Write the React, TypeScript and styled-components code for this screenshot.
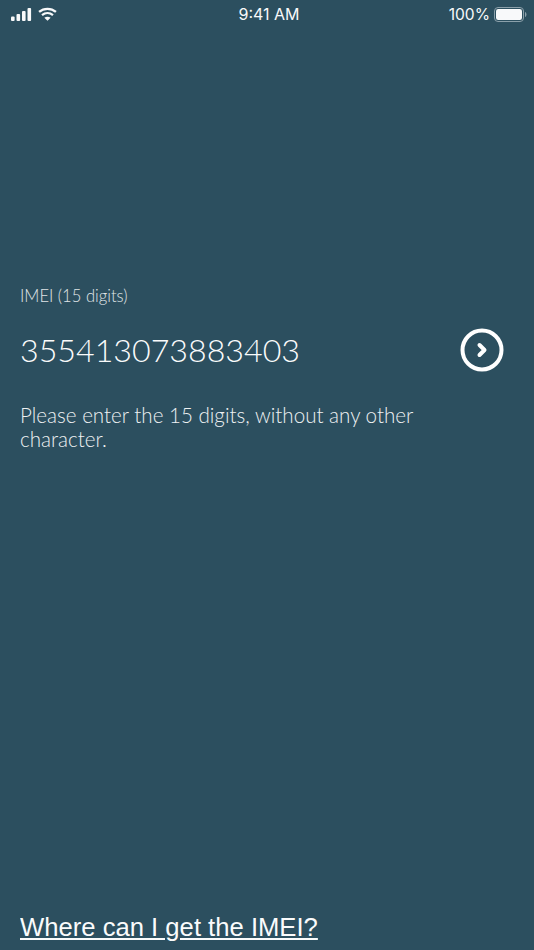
import React from 'react'
import styled, { createGlobalStyle } from 'styled-components'

const GlobalStyle = createGlobalStyle`
    html, body {
        margin: 0;
        padding: 0;
        background: #2c4f5f;
    }
`

const Screen = styled.div`
    width: 534px;
    height: 950px;
    background: #2c4f5f;
    color: #fff;
    display: flex;
    flex-direction: column;
    overflow: hidden;
    font-family: Lato, sans-serif;
`

const StatusBar = styled.div`
    height: 28px;
    flex: none;
    display: grid;
    grid-template-columns: 1fr auto 1fr;
    align-items: center;
    padding: 0 7px 0 11px;
    font-family: Inter, 'Liberation Sans', sans-serif;
    font-size: 16px;
    opacity: 0.97;
`

const StatusLeft = styled.div`
    display: flex;
    align-items: center;
    gap: 6px;
`

const StatusRight = styled.div`
    display: flex;
    align-items: center;
    justify-content: flex-end;
    gap: 4px;
    font-size: 15.6px;
`

const Main = styled.main`
    flex: 1;
    padding: 258px 30px 0 20px;
`

const Label = styled.div`
    font-size: 16.6px;
    font-weight: 300;
    line-height: 20px;
    opacity: 0.85;
`

const InputRow = styled.div`
    display: flex;
    align-items: center;
    justify-content: space-between;
    margin-top: 22px;
    height: 44px;
`

const Digits = styled.div`
    font-size: 32.2px;
    font-weight: 300;
    line-height: 44px;
    opacity: 0.98;
`

const Hint = styled.p`
    margin: 31px 0 0;
    width: 440px;
    font-size: 20.6px;
    font-weight: 300;
    line-height: 24px;
    opacity: 0.92;
`

const HelpLink = styled.a`
    flex: none;
    margin: 0 0 7px 20px;
    font-family: 'Liberation Sans', Arial, sans-serif;
    font-size: 25.65px;
    line-height: 32px;
    color: #fff;
    text-decoration: underline;
    opacity: 0.98;
`

const SignalIcon = () => (
    <svg width="21" height="13" viewBox="0 0 21 13" fill="#fff">
        <rect x="0" y="8.5" width="3.6" height="4.5" rx="1" />
        <rect x="5.5" y="6" width="3.6" height="7" rx="1" />
        <rect x="11" y="3" width="3.6" height="10" rx="1" />
        <rect x="16.5" y="0" width="3.6" height="13" rx="1" />
    </svg>
)

const WifiIcon = () => (
    <svg width="19" height="14" viewBox="0 0 18 13" fill="none" stroke="#fff" strokeWidth="2.2">
        <path d="M1 4.6C5.6 .6 12.4 .6 17 4.6" />
        <path d="M3.8 7.5C6.9 5 11.1 5 14.2 7.5" />
        <path d="M9 13L6 10C7.8 8.7 10.2 8.7 12 10Z" fill="#fff" stroke="none" />
    </svg>
)

const BatteryIcon = () => (
    <svg width="33" height="15" viewBox="0 0 33 15" fill="none">
        <rect x="0.5" y="0.5" width="29" height="14" rx="3.5" stroke="#8fa3ad" />
        <rect x="2" y="2" width="26" height="11" rx="2.2" fill="#fff" />
        <path d="M31 5v5c.9-.3 1.5-1.4 1.5-2.5S31.900 5.300 31 5z" fill="#8fa3ad" />
    </svg>
)

const NextIcon = () => (
    <svg width="44" height="44" viewBox="0 0 44 44" fill="none" stroke="#fff">
        <circle cx="22" cy="22" r="19.500" strokeWidth="4" />
        <path d="M19.500 17L24.500 22L19.500 27" strokeWidth="4" strokeLinecap="round" strokeLinejoin="round" />
    </svg>
)

const App: React.FunctionComponent = () => (
    <Screen>
        <GlobalStyle />
        <StatusBar>
            <StatusLeft>
                <SignalIcon />
                <WifiIcon />
            </StatusLeft>
            <span>9:41 AM</span>
            <StatusRight>
                <span>100%</span>
                <BatteryIcon />
            </StatusRight>
        </StatusBar>
        <Main>
            <Label>IMEI (15 digits)</Label>
            <InputRow>
                <Digits>355413073883403</Digits>
                <NextIcon />
            </InputRow>
            <Hint>Please enter the 15 digits, without any other character.</Hint>
        </Main>
        <HelpLink href="#">Where can I get the IMEI?</HelpLink>
    </Screen>
)

export default App
